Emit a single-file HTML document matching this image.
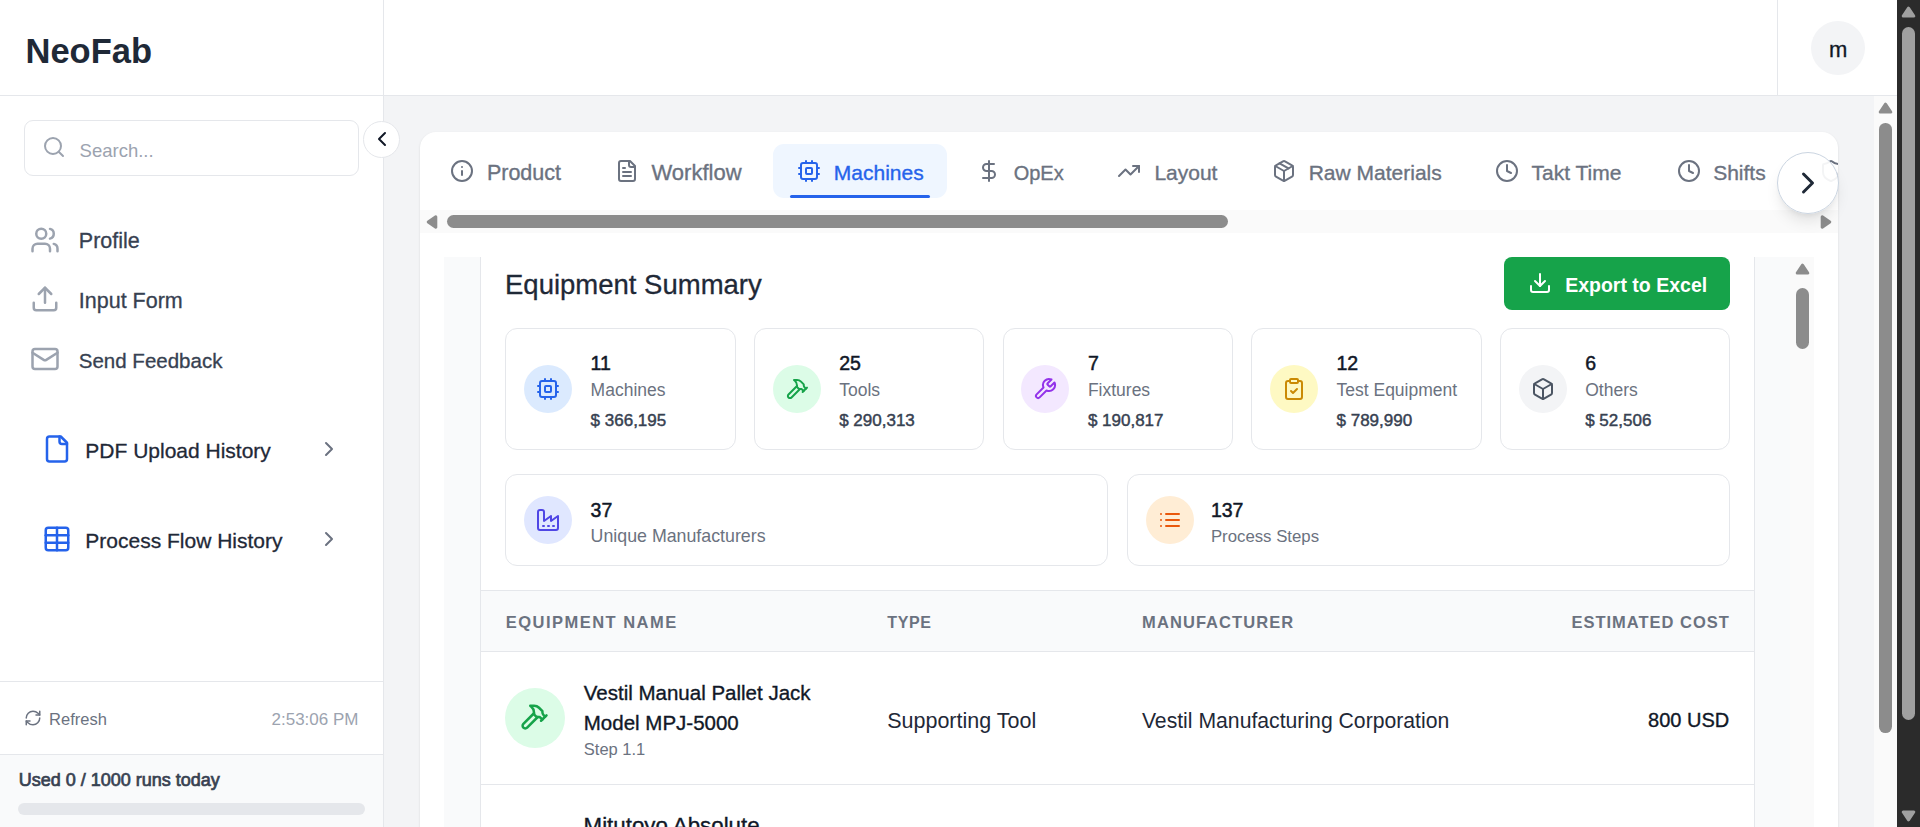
<!DOCTYPE html>
<html><head><meta charset="utf-8"><title>NeoFab - Machines</title>
<style>
html,body{margin:0;padding:0;width:1920px;height:827px;overflow:hidden;background:#fff;font-family:"Liberation Sans",sans-serif}
.a{position:absolute;box-sizing:border-box}
div.a{box-sizing:content-box}
.t{position:absolute;line-height:1;white-space:nowrap}
</style></head><body>
<div class="a" style="left:384px;top:96px;width:1490px;height:731px;background:#f3f4f6"></div>
<div class="a" style="left:384px;top:0px;width:1513px;height:95px;background:#fff"></div>
<div class="a" style="left:0px;top:95px;width:1897px;height:1px;background:#e5e7eb"></div>
<div class="a" style="left:1777px;top:0px;width:1px;height:95px;background:#e5e7eb"></div>
<div class="a" style="left:1811px;top:21px;width:54px;height:54px;background:#f3f4f6;border-radius:50%"></div>
<span class="t" style="left:1829.0px;top:39.2px;font-size:22px;color:#111827;-webkit-text-stroke:0.3px #111827;">m</span>
<div class="a" style="left:0px;top:0px;width:383px;height:827px;background:#fff"></div>
<div class="a" style="left:383px;top:0px;width:1px;height:827px;background:#e5e7eb"></div>
<div class="a" style="left:0px;top:95px;width:383px;height:1px;background:#e5e7eb"></div>
<span class="t" style="left:25.5px;top:33.9px;font-size:34.5px;color:#1f2937;font-weight:700;">NeoFab</span>
<div class="a" style="left:24px;top:120px;width:333px;height:54px;border:1px solid #e5e7eb;border-radius:9px;background:#fff"></div>
<svg class="a" style="left:41.8px;top:134.7px;" width="24" height="24" viewBox="0 0 24 24" fill="none" stroke="#9ca3af" stroke-width="2" stroke-linecap="round" stroke-linejoin="round"><circle cx="11" cy="11" r="8"/><path d="m21 21-4.3-4.3"/></svg>
<span class="t" style="left:79.6px;top:141.8px;font-size:18.5px;color:#9ca3af;">Search...</span>
<div class="a" style="left:363px;top:120.5px;width:35px;height:35px;border:1px solid #e5e7eb;border-radius:50%;background:#fff"></div>
<svg class="a" style="left:369.5px;top:127px;" width="24" height="24" viewBox="0 0 24 24" fill="none" stroke="#111827" stroke-width="2" stroke-linecap="round" stroke-linejoin="round"><path d="m15 18-6-6 6-6"/></svg>
<svg class="a" style="left:29.75px;top:224.5px;" width="30" height="30" viewBox="0 0 24 24" fill="none" stroke="#9ca3af" stroke-width="2" stroke-linecap="round" stroke-linejoin="round"><path d="M16 21v-2a4 4 0 0 0-4-4H6a4 4 0 0 0-4 4v2"/><circle cx="9" cy="7" r="4"/><path d="M22 21v-2a4 4 0 0 0-3-3.87"/><path d="M16 3.13a4 4 0 0 1 0 7.75"/></svg>
<span class="t" style="left:78.8px;top:230.9px;font-size:21.5px;color:#374151;-webkit-text-stroke:0.3px #374151;">Profile</span>
<svg class="a" style="left:29.5px;top:283.5px;" width="30" height="30" viewBox="0 0 24 24" fill="none" stroke="#9ca3af" stroke-width="2" stroke-linecap="round" stroke-linejoin="round"><path d="M21 15v4a2 2 0 0 1-2 2H5a2 2 0 0 1-2-2v-4"/><polyline points="17 8 12 3 7 8"/><line x1="12" x2="12" y1="3" y2="15"/></svg>
<span class="t" style="left:78.8px;top:291.2px;font-size:21.5px;color:#374151;-webkit-text-stroke:0.3px #374151;">Input Form</span>
<svg class="a" style="left:29.75px;top:344px;" width="30" height="30" viewBox="0 0 24 24" fill="none" stroke="#9ca3af" stroke-width="2" stroke-linecap="round" stroke-linejoin="round"><rect width="20" height="16" x="2" y="4" rx="2"/><path d="m22 7-8.97 5.7a1.94 1.94 0 0 1-2.06 0L2 7"/></svg>
<span class="t" style="left:78.8px;top:351px;font-size:20.5px;color:#374151;-webkit-text-stroke:0.3px #374151;">Send Feedback</span>
<svg class="a" style="left:42.25px;top:434.15px;" width="30" height="30" viewBox="0 0 24 24" fill="none" stroke="#2563eb" stroke-width="2" stroke-linecap="round" stroke-linejoin="round"><path d="M15 2H6a2 2 0 0 0-2 2v16a2 2 0 0 0 2 2h12a2 2 0 0 0 2-2V7Z"/><path d="M14 2v4a2 2 0 0 0 2 2h4"/></svg>
<span class="t" style="left:85.3px;top:440.1px;font-size:21px;color:#1f2937;-webkit-text-stroke:0.3px #1f2937;">PDF Upload History</span>
<svg class="a" style="left:317px;top:436.8px;" width="24" height="24" viewBox="0 0 24 24" fill="none" stroke="#6b7280" stroke-width="2" stroke-linecap="round" stroke-linejoin="round"><path d="m9 18 6-6-6-6"/></svg>
<svg class="a" style="left:42px;top:524.2px;" width="30" height="30" viewBox="0 0 24 24" fill="none" stroke="#2563eb" stroke-width="2" stroke-linecap="round" stroke-linejoin="round"><rect width="18" height="18" x="3" y="3" rx="2"/><path d="M3 9h18"/><path d="M3 15h18"/><path d="M12 3v18"/></svg>
<span class="t" style="left:85.3px;top:529.9px;font-size:21px;color:#1f2937;-webkit-text-stroke:0.3px #1f2937;">Process Flow History</span>
<svg class="a" style="left:317px;top:526.6px;" width="24" height="24" viewBox="0 0 24 24" fill="none" stroke="#6b7280" stroke-width="2" stroke-linecap="round" stroke-linejoin="round"><path d="m9 18 6-6-6-6"/></svg>
<div class="a" style="left:0px;top:681px;width:383px;height:1px;background:#e5e7eb"></div>
<svg class="a" style="left:23.5px;top:708.5px;" width="18" height="18" viewBox="0 0 24 24" fill="none" stroke="#6b7280" stroke-width="2" stroke-linecap="round" stroke-linejoin="round"><path d="M3 12a9 9 0 0 1 9-9 9.75 9.75 0 0 1 6.74 2.74L21 8"/><path d="M21 3v5h-5"/><path d="M21 12a9 9 0 0 1-9 9 9.75 9.75 0 0 1-6.74-2.74L3 16"/><path d="M8 16H3v5"/></svg>
<span class="t" style="left:49.1px;top:711.3px;font-size:16.5px;color:#6b7280;">Refresh</span>
<span class="t" style="left:271.5px;top:711.3px;font-size:17px;color:#9ca3af;">2:53:06 PM</span>
<div class="a" style="left:0px;top:754px;width:383px;height:1px;background:#e5e7eb"></div>
<div class="a" style="left:0px;top:755px;width:383px;height:72px;background:#f9fafb"></div>
<span class="t" style="left:18.7px;top:771px;font-size:18px;color:#374151;-webkit-text-stroke:0.7px #374151;">Used 0 / 1000 runs today</span>
<div class="a" style="left:18px;top:803px;width:347px;height:12px;background:#e5e7eb;border-radius:6px"></div>
<div class="a" style="left:420px;top:132px;width:1418px;height:760px;background:#fff;border-radius:16px;box-shadow:0 1px 3px rgba(0,0,0,.08),0 1px 2px rgba(0,0,0,.04)"></div>
<svg class="a" style="left:449.7px;top:159px;" width="24" height="24" viewBox="0 0 24 24" fill="none" stroke="#6b7280" stroke-width="2" stroke-linecap="round" stroke-linejoin="round"><circle cx="12" cy="12" r="10"/><path d="M12 16v-4"/><path d="M12 8h.01"/></svg>
<span class="t" style="left:486.9px;top:162.8px;font-size:21.5px;color:#6b7280;-webkit-text-stroke:0.35px #6b7280;">Product</span>
<svg class="a" style="left:614.8px;top:159px;" width="24" height="24" viewBox="0 0 24 24" fill="none" stroke="#6b7280" stroke-width="2" stroke-linecap="round" stroke-linejoin="round"><path d="M15 2H6a2 2 0 0 0-2 2v16a2 2 0 0 0 2 2h12a2 2 0 0 0 2-2V7Z"/><path d="M14 2v4a2 2 0 0 0 2 2h4"/><path d="M10 9H8"/><path d="M16 13H8"/><path d="M16 17H8"/></svg>
<span class="t" style="left:651.5px;top:161.8px;font-size:22px;color:#6b7280;-webkit-text-stroke:0.35px #6b7280;">Workflow</span>
<div class="a" style="left:773px;top:144px;width:174px;height:54px;background:#eff6ff;border-radius:11px"></div>
<div class="a" style="left:790px;top:195px;width:140px;height:3px;background:#2563eb;border-radius:2px"></div>
<svg class="a" style="left:797px;top:159px;" width="24" height="24" viewBox="0 0 24 24" fill="none" stroke="#2563eb" stroke-width="2" stroke-linecap="round" stroke-linejoin="round"><rect width="16" height="16" x="4" y="4" rx="2"/><rect width="6" height="6" x="9" y="9" rx="1"/><path d="M15 2v2"/><path d="M15 20v2"/><path d="M2 15h2"/><path d="M2 9h2"/><path d="M20 15h2"/><path d="M20 9h2"/><path d="M9 2v2"/><path d="M9 20v2"/></svg>
<span class="t" style="left:833.8px;top:161.8px;font-size:21px;color:#2563eb;-webkit-text-stroke:0.35px #2563eb;">Machines</span>
<svg class="a" style="left:976.7px;top:159px;" width="24" height="24" viewBox="0 0 24 24" fill="none" stroke="#6b7280" stroke-width="2" stroke-linecap="round" stroke-linejoin="round"><line x1="12" x2="12" y1="2" y2="22"/><path d="M17 5H9.5a3.5 3.5 0 0 0 0 7h5a3.5 3.5 0 0 1 0 7H6"/></svg>
<span class="t" style="left:1013.7px;top:162.8px;font-size:20px;color:#6b7280;-webkit-text-stroke:0.35px #6b7280;">OpEx</span>
<svg class="a" style="left:1116.8px;top:159px;" width="24" height="24" viewBox="0 0 24 24" fill="none" stroke="#6b7280" stroke-width="2" stroke-linecap="round" stroke-linejoin="round"><polyline points="22 7 13.5 15.5 8.5 10.5 2 17"/><polyline points="16 7 22 7 22 13"/></svg>
<span class="t" style="left:1154.4px;top:161.8px;font-size:21px;color:#6b7280;-webkit-text-stroke:0.35px #6b7280;">Layout</span>
<svg class="a" style="left:1272px;top:158.7px;" width="24" height="24" viewBox="0 0 24 24" fill="none" stroke="#6b7280" stroke-width="2" stroke-linecap="round" stroke-linejoin="round"><path d="m7.5 4.27 9 5.15"/><path d="M21 8a2 2 0 0 0-1-1.73l-7-4a2 2 0 0 0-2 0l-7 4A2 2 0 0 0 3 8v8a2 2 0 0 0 1 1.73l7 4a2 2 0 0 0 2 0l7-4A2 2 0 0 0 21 16Z"/><path d="m3.3 7 8.7 5 8.7-5"/><path d="M12 22V12"/></svg>
<span class="t" style="left:1308.7px;top:161.8px;font-size:21px;color:#6b7280;-webkit-text-stroke:0.35px #6b7280;">Raw Materials</span>
<svg class="a" style="left:1495px;top:159px;" width="24" height="24" viewBox="0 0 24 24" fill="none" stroke="#6b7280" stroke-width="2" stroke-linecap="round" stroke-linejoin="round"><circle cx="12" cy="12" r="10"/><polyline points="12 6 12 12 16 14"/></svg>
<span class="t" style="left:1531.6px;top:161.8px;font-size:21px;color:#6b7280;-webkit-text-stroke:0.35px #6b7280;">Takt Time</span>
<svg class="a" style="left:1676.9px;top:159px;" width="24" height="24" viewBox="0 0 24 24" fill="none" stroke="#6b7280" stroke-width="2" stroke-linecap="round" stroke-linejoin="round"><circle cx="12" cy="12" r="10"/><polyline points="12 6 12 12 16 14"/></svg>
<span class="t" style="left:1713.2px;top:161.8px;font-size:21px;color:#6b7280;-webkit-text-stroke:0.35px #6b7280;">Shifts</span>
<svg class="a" style="left:1819px;top:159px;clip-path:inset(0 5px 0 0)" width="24" height="24" viewBox="0 0 24 24" fill="none" stroke="#6b7280" stroke-width="2" stroke-linecap="round" stroke-linejoin="round"><path d="M20 13c0 5-3.5 7.5-7.66 8.95a1 1 0 0 1-.67-.01C7.5 20.5 4 18 4 13V6a1 1 0 0 1 1-1c2 0 4.5-1.2 6.24-2.72a1.17 1.17 0 0 1 1.52 0C14.51 3.81 17 5 19 5a1 1 0 0 1 1 1z"/></svg>
<div class="a" style="left:420px;top:210px;width:1418px;height:23px;background:#fafafa"></div>
<svg class="a" style="left:425px;top:214px" width="13" height="16" viewBox="0 0 13 16"><path d="M10.8 2.8 L3.2 8 L10.8 13.2 Z" fill="#8c8c8c" stroke="#8c8c8c" stroke-width="3" stroke-linejoin="round"/></svg>
<svg class="a" style="left:1820px;top:214px" width="13" height="16" viewBox="0 0 13 16"><path d="M2.2 2.8 L9.8 8 L2.2 13.2 Z" fill="#8c8c8c" stroke="#8c8c8c" stroke-width="3" stroke-linejoin="round"/></svg>
<div class="a" style="left:447px;top:215px;width:781px;height:13px;background:#8c8c8c;border-radius:6.5px"></div>
<div class="a" style="left:1777px;top:152px;width:60px;height:60px;background:rgba(255,255,255,.92);border:1px solid #cbd5e1;border-radius:50%;box-shadow:0 10px 15px -3px rgba(0,0,0,.1),0 4px 6px -4px rgba(0,0,0,.1)"></div>
<svg class="a" style="left:1789.8px;top:165.3px;" width="36" height="36" viewBox="0 0 24 24" fill="none" stroke="#1f2937" stroke-width="2" stroke-linecap="round" stroke-linejoin="round"><path d="m9 18 6-6-6-6"/></svg>
<div class="a" style="left:444px;top:257px;width:1346px;height:570px;background:#f9fafb"></div>
<div class="a" style="left:480px;top:257px;width:1275px;height:570px;background:#fff;border-left:1px solid #e5e7eb;border-right:1px solid #e5e7eb;box-sizing:border-box"></div>
<div class="a" style="left:1790px;top:257px;width:24px;height:570px;background:#fafafa"></div>
<svg class="a" style="left:1794px;top:262px" width="17" height="14" viewBox="0 0 17 14"><path d="M3.2 11 L8.5 3.2 L13.8 11 Z" fill="#8c8c8c" stroke="#8c8c8c" stroke-width="3" stroke-linejoin="round"/></svg>
<div class="a" style="left:1796px;top:288px;width:13px;height:61px;background:#8c8c8c;border-radius:6.5px"></div>
<span class="t" style="left:505.0px;top:271px;font-size:27.5px;color:#1f2937;-webkit-text-stroke:0.3px #1f2937;">Equipment Summary</span>
<div class="a" style="left:1504px;top:257px;width:226px;height:53px;background:#16a34a;border-radius:8px"></div>
<svg class="a" style="left:1528px;top:271px;" width="24" height="24" viewBox="0 0 24 24" fill="none" stroke="#fff" stroke-width="2" stroke-linecap="round" stroke-linejoin="round"><path d="M21 15v4a2 2 0 0 1-2 2H5a2 2 0 0 1-2-2v-4"/><polyline points="7 10 12 15 17 10"/><line x1="12" x2="12" y1="15" y2="3"/></svg>
<span class="t" style="left:1565.2px;top:276px;font-size:19.5px;color:#fff;font-weight:700;">Export to Excel</span>
<div class="a" style="left:505.4px;top:328px;width:230.4px;height:122px;border:1px solid #e5e7eb;border-radius:12px;background:#fff;box-sizing:border-box"></div>
<div class="a" style="left:524.0px;top:365px;width:48px;height:48px;background:#dbeafe;border-radius:50%"></div>
<svg class="a" style="left:536.0px;top:377px;" width="24" height="24" viewBox="0 0 24 24" fill="none" stroke="#2563eb" stroke-width="2" stroke-linecap="round" stroke-linejoin="round"><rect width="16" height="16" x="4" y="4" rx="2"/><rect width="6" height="6" x="9" y="9" rx="1"/><path d="M15 2v2"/><path d="M15 20v2"/><path d="M2 15h2"/><path d="M2 9h2"/><path d="M20 15h2"/><path d="M20 9h2"/><path d="M9 2v2"/><path d="M9 20v2"/></svg>
<span class="t" style="left:590.6px;top:354.4px;font-size:19.5px;color:#111827;-webkit-text-stroke:0.5px #111827;">11</span>
<span class="t" style="left:590.6px;top:382.2px;font-size:17.5px;color:#6b7280;">Machines</span>
<span class="t" style="left:590.6px;top:411.8px;font-size:17px;color:#374151;-webkit-text-stroke:0.45px #374151;">$ 366,195</span>
<div class="a" style="left:754.0px;top:328px;width:230.4px;height:122px;border:1px solid #e5e7eb;border-radius:12px;background:#fff;box-sizing:border-box"></div>
<div class="a" style="left:772.6px;top:365px;width:48px;height:48px;background:#dcfce7;border-radius:50%"></div>
<svg class="a" style="left:784.6px;top:377px;" width="24" height="24" viewBox="0 0 24 24" fill="none" stroke="#16a34a" stroke-width="2" stroke-linecap="round" stroke-linejoin="round"><path d="m15 12-8.5 8.5c-.83.83-2.17.83-3 0 0 0 0 0 0 0a2.12 2.12 0 0 1 0-3L12 9"/><path d="M17.64 15 22 10.64"/><path d="m20.91 11.7-1.25-1.25c-.6-.6-.93-1.4-.93-2.25v-.86L16.01 4.6a5.56 5.56 0 0 0-3.94-1.64H9l.92.82A6.18 6.18 0 0 1 12 8.4v1.56l2 2h2.47l2.26 1.91"/></svg>
<span class="t" style="left:839.2px;top:354.4px;font-size:19.5px;color:#111827;-webkit-text-stroke:0.5px #111827;">25</span>
<span class="t" style="left:839.2px;top:382.2px;font-size:17.5px;color:#6b7280;">Tools</span>
<span class="t" style="left:839.2px;top:411.8px;font-size:17px;color:#374151;-webkit-text-stroke:0.45px #374151;">$ 290,313</span>
<div class="a" style="left:1002.7px;top:328px;width:230.4px;height:122px;border:1px solid #e5e7eb;border-radius:12px;background:#fff;box-sizing:border-box"></div>
<div class="a" style="left:1021.3px;top:365px;width:48px;height:48px;background:#f3e8ff;border-radius:50%"></div>
<svg class="a" style="left:1033.3px;top:377px;" width="24" height="24" viewBox="0 0 24 24" fill="none" stroke="#9333ea" stroke-width="2" stroke-linecap="round" stroke-linejoin="round"><path d="M14.7 6.3a1 1 0 0 0 0 1.4l1.6 1.6a1 1 0 0 0 1.4 0l3.77-3.77a6 6 0 0 1-7.94 7.94l-6.91 6.91a2.12 2.12 0 0 1-3-3l6.91-6.91a6 6 0 0 1 7.94-7.94l-3.76 3.76z"/></svg>
<span class="t" style="left:1087.9px;top:354.4px;font-size:19.5px;color:#111827;-webkit-text-stroke:0.5px #111827;">7</span>
<span class="t" style="left:1087.9px;top:382.2px;font-size:17.5px;color:#6b7280;">Fixtures</span>
<span class="t" style="left:1087.9px;top:411.8px;font-size:17px;color:#374151;-webkit-text-stroke:0.45px #374151;">$ 190,817</span>
<div class="a" style="left:1251.3px;top:328px;width:230.4px;height:122px;border:1px solid #e5e7eb;border-radius:12px;background:#fff;box-sizing:border-box"></div>
<div class="a" style="left:1269.9px;top:365px;width:48px;height:48px;background:#fef9c3;border-radius:50%"></div>
<svg class="a" style="left:1281.9px;top:377px;" width="24" height="24" viewBox="0 0 24 24" fill="none" stroke="#ca8a04" stroke-width="2" stroke-linecap="round" stroke-linejoin="round"><rect width="8" height="4" x="8" y="2" rx="1" ry="1"/><path d="M16 4h2a2 2 0 0 1 2 2v14a2 2 0 0 1-2 2H6a2 2 0 0 1-2-2V6a2 2 0 0 1 2-2h2"/><path d="m9 14 2 2 4-4"/></svg>
<span class="t" style="left:1336.5px;top:354.4px;font-size:19.5px;color:#111827;-webkit-text-stroke:0.5px #111827;">12</span>
<span class="t" style="left:1336.5px;top:382.2px;font-size:17.5px;color:#6b7280;">Test Equipment</span>
<span class="t" style="left:1336.5px;top:411.8px;font-size:17px;color:#374151;-webkit-text-stroke:0.45px #374151;">$ 789,990</span>
<div class="a" style="left:1500.0px;top:328px;width:230.4px;height:122px;border:1px solid #e5e7eb;border-radius:12px;background:#fff;box-sizing:border-box"></div>
<div class="a" style="left:1518.6px;top:365px;width:48px;height:48px;background:#f3f4f6;border-radius:50%"></div>
<svg class="a" style="left:1530.6px;top:377px;" width="24" height="24" viewBox="0 0 24 24" fill="none" stroke="#4b5563" stroke-width="2" stroke-linecap="round" stroke-linejoin="round"><path d="M21 8a2 2 0 0 0-1-1.73l-7-4a2 2 0 0 0-2 0l-7 4A2 2 0 0 0 3 8v8a2 2 0 0 0 1 1.73l7 4a2 2 0 0 0 2 0l7-4A2 2 0 0 0 21 16Z"/><path d="m3.3 7 8.7 5 8.7-5"/><path d="M12 22V12"/></svg>
<span class="t" style="left:1585.2px;top:354.4px;font-size:19.5px;color:#111827;-webkit-text-stroke:0.5px #111827;">6</span>
<span class="t" style="left:1585.2px;top:382.2px;font-size:17.5px;color:#6b7280;">Others</span>
<span class="t" style="left:1585.2px;top:411.8px;font-size:17px;color:#374151;-webkit-text-stroke:0.45px #374151;">$ 52,506</span>
<div class="a" style="left:505.2px;top:474.4px;width:603.25px;height:91.2px;border:1px solid #e5e7eb;border-radius:12px;background:#fff;box-sizing:border-box"></div>
<div class="a" style="left:523.9px;top:496px;width:48px;height:48px;background:#e0e7ff;border-radius:50%"></div>
<svg class="a" style="left:535.9px;top:508px;" width="24" height="24" viewBox="0 0 24 24" fill="none" stroke="#4f46e5" stroke-width="2" stroke-linecap="round" stroke-linejoin="round"><path d="M2 20a2 2 0 0 0 2 2h16a2 2 0 0 0 2-2V8l-7 5V8l-7 5V4a2 2 0 0 0-2-2H4a2 2 0 0 0-2 2Z"/><path d="M17 18h1"/><path d="M12 18h1"/><path d="M7 18h1"/></svg>
<span class="t" style="left:590.6px;top:500.6px;font-size:19.5px;color:#111827;-webkit-text-stroke:0.5px #111827;">37</span>
<span class="t" style="left:590.6px;top:527.9px;font-size:17.8px;color:#6b7280;">Unique Manufacturers</span>
<div class="a" style="left:1127.0px;top:474.4px;width:603.25px;height:91.2px;border:1px solid #e5e7eb;border-radius:12px;background:#fff;box-sizing:border-box"></div>
<div class="a" style="left:1145.7px;top:496px;width:48px;height:48px;background:#ffedd5;border-radius:50%"></div>
<svg class="a" style="left:1157.7px;top:508px;" width="24" height="24" viewBox="0 0 24 24" fill="none" stroke="#ea580c" stroke-width="2" stroke-linecap="round" stroke-linejoin="round"><line x1="8" x2="21" y1="6" y2="6"/><line x1="8" x2="21" y1="12" y2="12"/><line x1="8" x2="21" y1="18" y2="18"/><line x1="3" x2="3.01" y1="6" y2="6"/><line x1="3" x2="3.01" y1="12" y2="12"/><line x1="3" x2="3.01" y1="18" y2="18"/></svg>
<span class="t" style="left:1210.9px;top:500.6px;font-size:19.5px;color:#111827;-webkit-text-stroke:0.5px #111827;">137</span>
<span class="t" style="left:1210.9px;top:528.9px;font-size:16.8px;color:#6b7280;">Process Steps</span>
<div class="a" style="left:481px;top:590px;width:1273px;height:62px;background:#f9fafb;border-top:1px solid #e5e7eb;border-bottom:1px solid #e5e7eb;box-sizing:border-box"></div>
<span class="t" style="left:505.7px;top:614px;font-size:16.5px;color:#6b7280;font-weight:700;letter-spacing:0.09em;">EQUIPMENT NAME</span>
<span class="t" style="left:887.3px;top:615px;font-size:16px;color:#6b7280;font-weight:700;letter-spacing:0.04em;">TYPE</span>
<span class="t" style="left:1142.1px;top:614px;font-size:16.5px;color:#6b7280;font-weight:700;letter-spacing:0.065em;">MANUFACTURER</span>
<span class="t" style="left:1571.4px;top:614px;font-size:16.5px;color:#6b7280;font-weight:700;letter-spacing:0.06em;">ESTIMATED COST</span>
<div class="a" style="left:505px;top:688px;width:60px;height:60px;background:#dcfce7;border-radius:50%"></div>
<svg class="a" style="left:519px;top:702px;" width="30" height="30" viewBox="0 0 24 24" fill="none" stroke="#16a34a" stroke-width="2" stroke-linecap="round" stroke-linejoin="round"><path d="m15 12-8.5 8.5c-.83.83-2.17.83-3 0 0 0 0 0 0 0a2.12 2.12 0 0 1 0-3L12 9"/><path d="M17.64 15 22 10.64"/><path d="m20.91 11.7-1.25-1.25c-.6-.6-.93-1.4-.93-2.25v-.86L16.01 4.6a5.56 5.56 0 0 0-3.94-1.64H9l.92.82A6.18 6.18 0 0 1 12 8.4v1.56l2 2h2.47l2.26 1.91"/></svg>
<span class="t" style="left:583.8px;top:682.7px;font-size:20.5px;color:#111827;-webkit-text-stroke:0.35px #111827;">Vestil Manual Pallet Jack</span>
<span class="t" style="left:583.8px;top:712.6px;font-size:20.5px;color:#111827;-webkit-text-stroke:0.35px #111827;">Model MPJ-5000</span>
<span class="t" style="left:583.8px;top:740.8px;font-size:16.5px;color:#6b7280;">Step 1.1</span>
<span class="t" style="left:887.2px;top:710.5px;font-size:21.5px;color:#1f2937;">Supporting Tool</span>
<span class="t" style="left:1141.9px;top:709.5px;font-size:21.2px;color:#1f2937;">Vestil Manufacturing Corporation</span>
<span class="t" style="left:1648.1px;top:709.7px;font-size:20px;color:#111827;-webkit-text-stroke:0.35px #111827;">800 USD</span>
<div class="a" style="left:481px;top:784px;width:1273px;height:1px;background:#e5e7eb"></div>
<span class="t" style="left:583.6px;top:815px;font-size:22.3px;color:#111827;-webkit-text-stroke:0.35px #111827;">Mitutoyo Absolute</span>
<div class="a" style="left:1874px;top:96px;width:23px;height:731px;background:#fafafa"></div>
<svg class="a" style="left:1877px;top:101px" width="17" height="14" viewBox="0 0 17 14"><path d="M3.2 11 L8.5 3.2 L13.8 11 Z" fill="#8c8c8c" stroke="#8c8c8c" stroke-width="3" stroke-linejoin="round"/></svg>
<div class="a" style="left:1879.2px;top:123px;width:12.8px;height:610px;background:#8c8c8c;border-radius:6.4px"></div>
<div class="a" style="left:1897px;top:0px;width:23px;height:827px;background:#2b2b2b"></div>
<svg class="a" style="left:1900px;top:5px" width="17" height="14" viewBox="0 0 17 14"><path d="M3.2 11 L8.5 3.2 L13.8 11 Z" fill="#a0a0a0" stroke="#a0a0a0" stroke-width="3" stroke-linejoin="round"/></svg>
<div class="a" style="left:1902px;top:27px;width:13.2px;height:693px;background:#a0a0a0;border-radius:6.6px"></div>
<svg class="a" style="left:1900px;top:809px" width="17" height="14" viewBox="0 0 17 14"><path d="M3.2 3 L8.5 10.8 L13.8 3 Z" fill="#a0a0a0" stroke="#a0a0a0" stroke-width="3" stroke-linejoin="round"/></svg>
</body></html>
